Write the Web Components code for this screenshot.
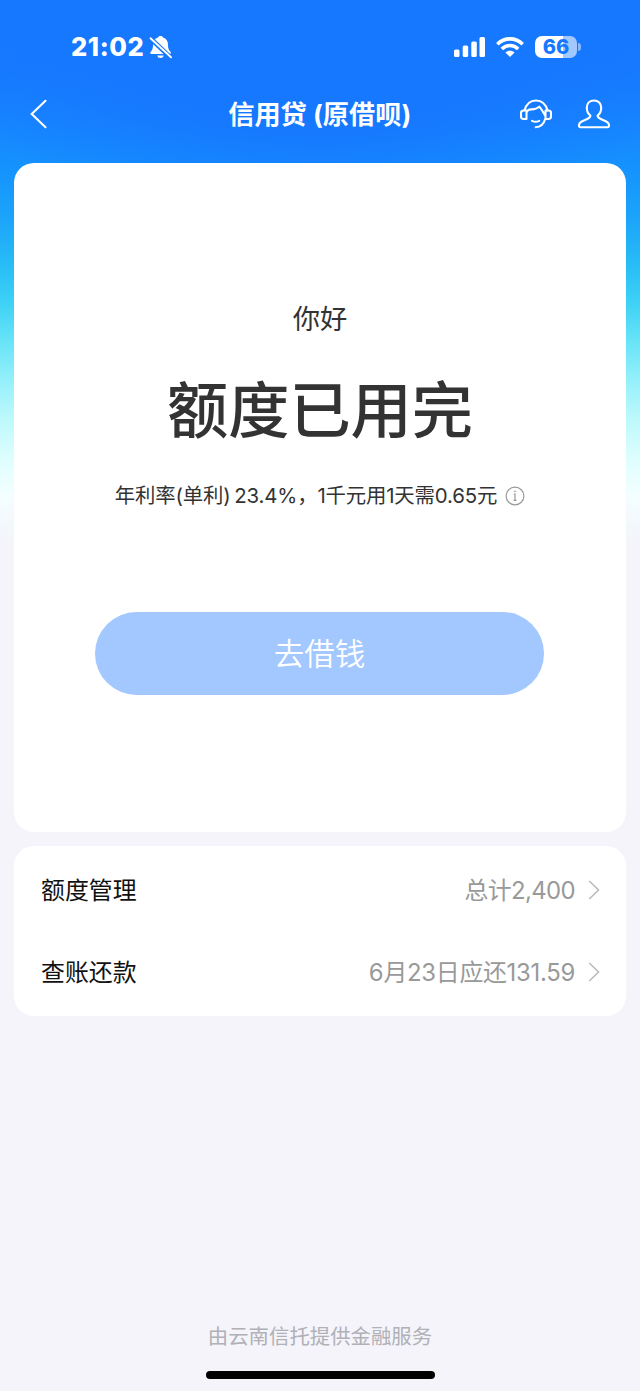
<!DOCTYPE html>
<html lang="zh-CN">
<head>
<meta charset="utf-8">
<title>信用贷</title>
<style>
html,body{margin:0;height:100%}
body{background:#f4f4fa;font-family:Inter,"Noto Sans CJK SC",sans-serif;-webkit-font-smoothing:antialiased}
</style>
</head>
<body>
<loan-page>
  <status-bar slot="top" time="21:02" battery="66"></status-bar>
  <nav-bar slot="top">信用贷 (原借呗)</nav-bar>
  <quota-card>
    <span slot="hello">你好</span>
    <span slot="title">额度已用完</span>
    <span slot="rate">年利率(单利) 23.4%，1千元用1天需0.65元</span>
    <span slot="action">去借钱</span>
  </quota-card>
  <menu-list>
    <menu-row>额度管理<span slot="value" style="letter-spacing:-.6px">总计2,400</span></menu-row>
    <menu-row>查账还款<span slot="value">6月23日应还131.59</span></menu-row>
  </menu-list>
  <page-footer slot="bottom">由云南信托提供金融服务</page-footer>
</loan-page>
<script>
function define(name, html) {
  const t = document.createElement('template');
  t.innerHTML = html;
  customElements.define(name, class extends HTMLElement {
    constructor() {
      super();
      this.attachShadow({mode: 'open'}).append(t.content.cloneNode(true));
    }
    connectedCallback() {
      this.shadowRoot.querySelectorAll('[data-attr]').forEach(e => {
        e.textContent = this.getAttribute(e.dataset.attr);
      });
    }
  });
}

define('loan-page', `<style>
:host{display:flex;flex-direction:column;box-sizing:border-box;width:640px;height:1391px;overflow:hidden;
 background:radial-gradient(ellipse 420px 230px at 50% 0,#1677ff 0,#1677ff 50%,rgba(22,119,255,0) 100%),
 linear-gradient(#1677ff 0,#167bff 70px,#1688ff 130px,#1593fe 170px,#1ca5fa 220px,#26baf6 260px,#3bd0f5 300px,#66e3f7 340px,#94f0fa 380px,#bef9fc 420px,#dffefe 460px,#f3feff 495px,#f4f4fa 545px)}
main{display:flex;flex-direction:column;gap:14px;padding:0 14px;flex:1}
</style><slot name="top"></slot><main><slot></slot></main><slot name="bottom"></slot>`);

define('status-bar', `<style>
:host{display:flex;align-items:center;height:66px;padding:28px 59px 0 71px;box-sizing:border-box;color:#fff}
.time{font-size:25.500px;font-weight:800;line-height:38px;width:75px;letter-spacing:.6px;white-space:nowrap}
svg{display:block;flex:none}
.bell{margin-left:3px}
.signal{margin-left:auto}
.wifi{margin-left:11px}
.bat{margin-left:11px;width:42px;height:22px;border-radius:7px;background:linear-gradient(90deg,#fff 66%,#a3c8ff 66%);color:#1677ff;font-weight:800;font-size:20px;line-height:23px;text-align:center}
.cap{width:3px;height:8px;margin-left:1px;border-radius:0 3px 3px 0;background:#86b7ff}
</style>
<span class="time" data-attr="time"></span>
<svg class="bell" width="24" height="24" viewBox="0 0 24 24"><path fill="#fff" d="M11.500 1c1.600 0 2.300.7 2.600 1.600 3.300 1 4.900 3.700 4.900 7.200 0 4.200 1.100 5.700 2.400 7 .9 1 .5 2.200-.7 2.200H2.500c-1.300 0-1.700-1.200-.8-2.200C3 15.500 4 14 4 9.800c0-3.500 1.700-6.200 5-7.200C9.200 1.700 10 1 11.500 1zM8.200 20.500h6.600c-.5 1.700-1.600 2.500-3.300 2.500s-2.800-.8-3.300-2.500z"/><path d="M1 3l21 20" stroke="#1677ff" stroke-width="4.600"/><path d="M1.500 3.300l20.500 19" stroke="#fff" stroke-width="1.900" stroke-linecap="round"/></svg>
<svg class="signal" width="32" height="20" viewBox="0 0 32 20" fill="#fff"><rect x="1" y="12.500" width="5.500" height="7.500" rx="1.500"/><rect x="9.700" y="8.500" width="5.500" height="11.500" rx="1.500"/><rect x="18.300" y="4.500" width="5.500" height="15.500" rx="1.500"/><rect x="26.500" width="5.500" height="20" rx="1.500"/></svg>
<svg class="wifi" width="28" height="20" viewBox="0 0 28 20" fill="none" stroke="#fff" stroke-width="3.600"><path d="M1.300 7.300C8.500.1 19.500.1 26.700 7.300"/><path d="M5.800 12c4.800-4.600 11.600-4.600 16.400 0"/><path d="M14 20l-4.600-4.500c2.700-2.200 6.500-2.200 9.200 0z" fill="#fff" stroke="none"/></svg>
<span class="bat" data-attr="battery"></span><span class="cap"></span>`);

define('nav-bar', `<style>
:host{display:grid;grid-template-columns:1fr auto 1fr;align-items:center;height:97px;padding:0 30.500px 0 30px;box-sizing:border-box;color:#fff}
h1{margin:0;font-size:26.200px;line-height:40px;font-weight:700;white-space:nowrap}
svg{display:block;fill:none;stroke:#fff;stroke-width:2.100;stroke-linecap:round;stroke-linejoin:round;margin-bottom:1px}
.tools{display:flex;justify-content:flex-end;gap:26px}
</style>
<svg width="18" height="30" viewBox="0 0 18 30"><path d="M15.500 1.800L1.700 15l13.800 13.200" stroke-linejoin="miter"/></svg>
<h1><slot></slot></h1>
<div class="tools">
<svg width="32" height="30" viewBox="0 0 32 30"><path d="M4.500 11.500C6.300 5 10.700 1.500 16 1.500S25.700 5 27.500 11.500"/><path d="M6.500 11.500h-3c-1.500 0-2.500 1-2.500 2.500v3.500c0 1.500 1 2.500 2.500 2.500h3v-6.500c.7-2 2.300-3.100 4.600-3.100 3.700.1 6.300-.8 8.200-2.800 2.400 2.600 4.200 6.200 6.200 9.400V20h3c1.500 0 2.500-1 2.500-2.500V14c0-1.500-1-2.500-2.500-2.500h-3V17"/><path d="M25 20.500c-1.400 4.900-4.300 7.500-9.300 7.700"/><path d="M12 21.800c2.400 1.300 4.800 1.300 7.200 0"/></svg>
<svg width="32" height="30" viewBox="0 0 32 30"><path d="M16 1.500c-4.400 0-7.200 2.900-7.200 7.300 0 3.600 1.100 6 3.600 7.700 0 1.600-1 2.500-3.200 3.500l-5.500 2.500C1.800 23.400 1 24.500 1 26.300v.7c0 .8.600 1.300 1.400 1.300h27.200c.8 0 1.400-.5 1.400-1.300v-.7c0-1.800-.8-2.900-2.700-3.800L22.800 20c-2.200-1-3.200-1.900-3.200-3.500 2.500-1.700 3.600-4.100 3.600-7.700 0-4.400-2.800-7.300-7.200-7.300z"/></svg>
</div>`);

define('quota-card', `<style>
:host{display:flex;flex-direction:column;align-items:center;height:669px;box-sizing:border-box;padding-top:137px;border-radius:20px;background:#fff;color:#333;white-space:nowrap}
.hello{font-size:27.300px;line-height:40px}
.title{font-size:61.200px;line-height:80px;font-weight:500;margin-top:31px}
.rate{display:flex;align-items:center;gap:8px;font-size:20.400px;line-height:30px;margin-top:30px;letter-spacing:-.16px;word-spacing:-1.800px}
button{width:449px;height:83px;margin:101px 1px 0 0;padding:1px 0 0;border:0;border-radius:42px;background:#a3c7ff;color:#fff;font:350 30.500px/82px Inter,"Noto Sans CJK SC",sans-serif}
</style>
<div class="hello"><slot name="hello"></slot></div>
<div class="title"><slot name="title"></slot></div>
<div class="rate"><slot name="rate"></slot><svg width="20" height="20" viewBox="0 0 20 20" fill="none" stroke="#999" stroke-width="1.200"><circle cx="10" cy="10" r="8.900"/><path d="M8.800 8.200H10v6M8.500 14.300h3"/><circle cx="10" cy="5.400" r=".7" fill="#999" stroke-width=".4"/></svg></div>
<button><slot name="action"></slot></button>`);

define('menu-list', `<style>
:host{display:flex;flex-direction:column;height:170px;box-sizing:border-box;padding:3px 0;border-radius:20px;background:#fff}
</style><slot></slot>`);

define('menu-row', `<style>
:host{display:flex;align-items:center;height:82px;padding:0 26px 0 27px;box-sizing:border-box;font-size:23.900px;line-height:36px;color:#111;white-space:nowrap}
span{padding-top:2px}
::slotted(span){letter-spacing:-.28px}
.value{margin-left:auto;color:#999;font-weight:400}
svg{margin-left:13px;display:block}
</style>
<span><slot></slot></span><span class="value"><slot name="value"></slot></span>
<svg width="12" height="20" viewBox="0 0 12 20" fill="none" stroke="#bbb" stroke-width="1.600"><path d="M1.300 1l9.200 9-9.200 9"/></svg>`);

define('page-footer', `<style>
:host{display:flex;flex-direction:column;align-items:center;height:69px;color:#b0b0b6;font-size:20.400px;line-height:30px}
i{width:229px;height:8px;border-radius:4px;background:#000;margin-top:19px}
</style><span><slot></slot></span><i></i>`);
</script>
</body>
</html>
